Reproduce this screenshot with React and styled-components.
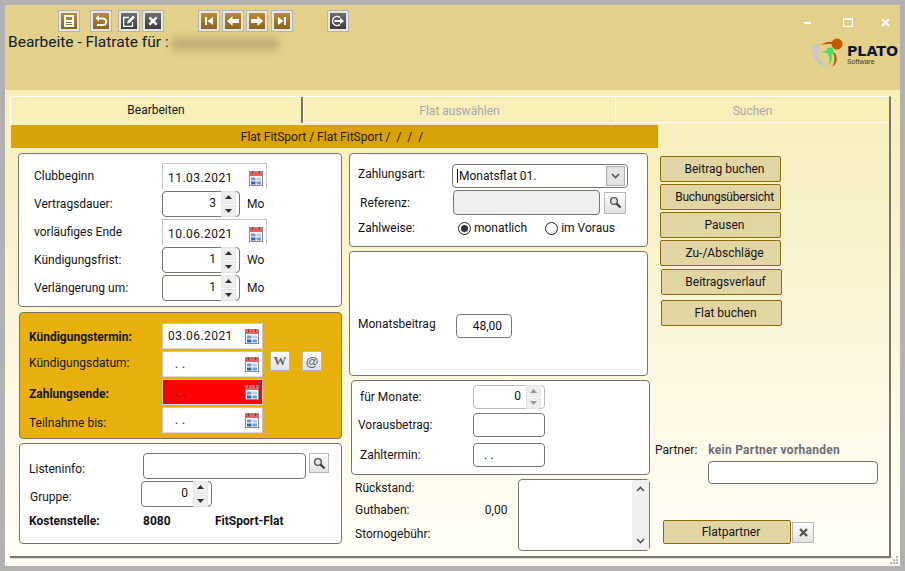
import React from "react";
import styled, { createGlobalStyle } from "styled-components";

const GlobalStyle = createGlobalStyle`
  html, body { margin: 0; padding: 0; }
  body { font-family: Roboto, "Noto Sans", "Liberation Sans", sans-serif; font-size: 12px; color: #141414; }
`;

const Window = styled.div`
  width: 905px;
  height: 571px;
  box-sizing: border-box;
  border: 5px solid #b1b1b1;
  display: flex;
  flex-direction: column;
  overflow: hidden;
`;

const Header = styled.div`
  height: 85px;
  flex: none;
  background: #e3d08a;
  display: flex;
  justify-content: space-between;
`;

const HeaderLeft = styled.div`
  padding: 5px 0 0 3px;
`;

const Toolbar = styled.div`
  display: flex;
`;

const ToolGroup = styled.div`
  display: flex;
  gap: 2px;
  margin-left: ${(p) => p.$ml}px;
`;

const ToolBtn = styled.div`
  width: 22px;
  height: 22px;
  box-sizing: border-box;
  border: 1px solid #b4b4b4;
  padding: 2px;
  margin-left: ${(p) => p.$ml || 0}px;
  background: #e6e6e0;
  & > div {
    width: 16px;
    height: 16px;
    display: flex;
    align-items: center;
    justify-content: center;
    background: ${(p) =>
      p.$dark
        ? "linear-gradient(#6e6e6e, #3c3c3c)"
        : "linear-gradient(#b98c34, #8a6420)"};
  }
`;

const Title = styled.div`
  font-size: 15.5px;
  line-height: 20px;
  color: #10202c;
  display: flex;
  align-items: center;
  gap: 3px;
`;

const BlurredName = styled.span`
  display: inline-block;
  width: 106px;
  height: 12px;
  margin-top: 4px;
  background: #bcaa74;
  filter: blur(4px);
`;

const HeaderRight = styled.div`
  display: flex;
  flex-direction: column;
  align-items: flex-end;
`;

const WinControls = styled.div`
  display: flex;
  align-items: center;
  height: 17px;
  margin-top: 9px;
  margin-right: 10px;
  gap: 28px;
  svg:first-child { margin-right: 3px; }
`;

const LogoBox = styled.div`
  display: flex;
  margin-top: 7px;
  margin-right: 2px;
`;

const LogoText = styled.div`
  padding-top: 7px;
  color: #10123e;
  b {
    display: block;
    font-family: "DejaVu Sans", sans-serif;
    font-size: 14.2px;
    line-height: 13px;
    font-weight: 700;
  }
  span {
    display: block;
    font-family: "Liberation Sans", sans-serif;
    font-size: 7px;
    line-height: 7px;
    color: #3d3a2a;
  }
`;

const Body = styled.div`
  flex: 1;
  position: relative;
  padding: 6px 9px 8px 5px;
  background: linear-gradient(#f7eeb8, #fffdf4 90%);
`;

const Grip = styled.svg`
  position: absolute;
  right: 1px;
  bottom: 1px;
`;

const TabPanel = styled.div`
  height: 462px;
  box-sizing: border-box;
  border-top: 1px solid #fff;
  border-right: 2px solid #77756c;
  border-bottom: 2px solid #77756c;
  box-shadow: 0 1px 0 #ddd;
  border-top-left-radius: 3px;
`;

const Tabs = styled.div`
  display: flex;
  height: 26px;
  border-bottom: 1px solid transparent;
`;

const Tab = styled.div`
  width: ${(p) => p.$w}px;
  box-sizing: border-box;
  display: flex;
  align-items: center;
  justify-content: center;
  padding-top: ${(p) => (p.$active ? 0 : 3)}px;
  background: #f7eeb8;
  color: ${(p) => (p.$active ? "#161616" : "#a9a8b0")};
  border-left: 1px solid #fff;
  border-bottom: ${(p) => (p.$active ? "0" : "1px solid #fff")};
  border-right: ${(p) => (p.$active ? "2px solid #77756c" : "0")};
`;

const TabBar = styled.div`
  width: 647px;
  height: 23px;
  margin: 1px 0 0 1px;
  padding-right: 5px;
  box-sizing: border-box;
  background: #d7a305;
  display: flex;
  align-items: center;
  justify-content: center;
  color: #261a00;
`;

const Columns = styled.div`
  display: flex;
  padding: 5px 0 0 8px;
`;

const LeftCol = styled.div`
  width: 324px;
  display: flex;
  flex-direction: column;
  align-items: flex-end;
`;

const MidCol = styled.div`
  width: 301px;
  margin-left: 7px;
  display: flex;
  flex-direction: column;
`;

const RightCol = styled.div`
  margin-left: 5px;
  width: 232px;
`;

const Card = styled.div`
  box-sizing: border-box;
  width: ${(p) => p.$w}px;
  height: ${(p) => p.$h}px;
  margin-top: ${(p) => p.$mt || 0}px;
  margin-left: ${(p) => p.$ml || 0}px;
  padding: ${(p) => p.$pad};
  background: ${(p) => p.$bg || "#fff"};
  border: 1px solid #77756c;
  border-radius: 4px;
  display: flex;
  flex-direction: column;
  justify-content: ${(p) => (p.$center ? "center" : "flex-start")};
  gap: ${(p) => p.$gap || 0}px;
  flex: none;
`;

const Row = styled.div`
  display: flex;
  align-items: center;
  height: ${(p) => p.$h || 26}px;
  margin-top: ${(p) => p.$mt || 0}px;
`;

const Label = styled.div`
  width: ${(p) => p.$w}px;
  margin-left: ${(p) => p.$ml || 0}px;
  flex: none;
  font-weight: ${(p) => (p.$bold ? 700 : 400)};
  position: relative;
  top: ${(p) => p.$up || 0}px;
`;

const Unit = styled.div`
  margin-left: 7px;
`;

const DateField = styled.div`
  box-sizing: border-box;
  width: ${(p) => p.$w}px;
  height: 26px;
  display: flex;
  align-items: center;
  justify-content: space-between;
  padding: ${(p) => (p.$open ? "3px" : "0")} 3px 0 5px;
  background: ${(p) => p.$bg || "#fff"};
  border: 1px solid #c4c4c4;
  border-bottom: ${(p) => (p.$open ? "0" : "1px solid #d8d8d8")};
  letter-spacing: 0.45px;
  span { margin-left: ${(p) => (p.$empty ? 7 : 0)}px; }
`;

const SpinBox = styled.div`
  box-sizing: border-box;
  width: ${(p) => p.$w}px;
  height: ${(p) => p.$h || 26}px;
  border: 1px solid ${(p) => (p.$light ? "#bdbdbd" : "#77756c")};
  border-radius: 4px;
  background: #fff;
  display: flex;
  align-items: center;
  justify-content: flex-end;
  padding-right: 3px;
  gap: 5px;
  span { margin-top: -3px; }
`;

const SpinBtns = styled.div`
  width: 15px;
  display: flex;
  flex-direction: column;
  gap: 1px;
  div {
    height: ${(p) => (p.$light ? 9.5 : 10.5)}px;
    background: #eeeeee;
    border: 1px solid #e4e4e4;
    display: flex;
    align-items: center;
    justify-content: center;
  }
`;

const Input = styled.div`
  box-sizing: border-box;
  width: ${(p) => p.$w}px;
  height: ${(p) => p.$h || 24}px;
  margin-left: ${(p) => p.$ml || 0}px;
  margin-top: ${(p) => p.$mt || 0}px;
  border: 1px solid #77756c;
  border-radius: 4px;
  background: ${(p) => p.$bg || "#fff"};
  display: flex;
  align-items: center;
  padding: 0 ${(p) => p.$pr || 0}px 0 ${(p) => p.$pl || 0}px;
  justify-content: ${(p) => (p.$right ? "flex-end" : "flex-start")};
`;

const SelectBox = styled(Input)`
  justify-content: space-between;
  padding: 0 2px 0 4px;
  span { border-left: 1px solid #111; padding-left: 1px; }
`;

const SelectArrow = styled.div`
  width: 17px;
  height: 18px;
  background: #e3e3e3;
  border: 1px solid #aaa;
  display: flex;
  align-items: center;
  justify-content: center;
`;

const IconBtn = styled.div`
  box-sizing: border-box;
  width: ${(p) => p.$w || 20}px;
  height: ${(p) => p.$h || 20}px;
  margin-left: ${(p) => p.$ml || 0}px;
  align-self: ${(p) => (p.$top ? "flex-start" : "center")};
  border: 1px solid #b7b7b7;
  background: linear-gradient(#fdfdfd, #e2e2e2);
  display: flex;
  align-items: center;
  justify-content: center;
  font-family: ${(p) => (p.$sans ? '"Liberation Sans"' : '"Liberation Serif"')}, serif;
  font-weight: 700;
  font-size: 13px;
  color: #666;
`;

const Radio = styled.div`
  box-sizing: border-box;
  width: 13px;
  height: 13px;
  border-radius: 50%;
  border: 1px solid #222;
  margin-left: ${(p) => p.$ml}px;
  margin-right: 3px;
  background: #fff;
  display: flex;
  align-items: center;
  justify-content: center;
  &::after {
    content: "";
    width: 7px;
    height: 7px;
    border-radius: 50%;
    background: ${(p) => (p.$on ? "#333" : "transparent")};
  }
`;

const BottomRow = styled.div`
  display: flex;
  margin-top: 4px;
  height: 72px;
`;

const Stats = styled.div`
  width: 153px;
  margin-left: 6px;
  display: flex;
  flex-direction: column;
`;

const StatRow = styled.div`
  display: flex;
  justify-content: space-between;
  height: ${(p) => p.$h}px;
  align-items: center;
`;

const Memo = styled.div`
  box-sizing: border-box;
  width: 132px;
  margin-left: 11px;
  border: 1px solid #77756c;
  border-radius: 4px;
  background: #fff;
  display: flex;
  justify-content: flex-end;
`;

const MemoScroll = styled.div`
  width: 17px;
  background: #f0f0f0;
  display: flex;
  flex-direction: column;
  justify-content: space-between;
  align-items: center;
  padding: 6px 0;
`;

const ActionBtn = styled.div`
  box-sizing: border-box;
  width: ${(p) => p.$w || 121}px;
  height: ${(p) => p.$h || 26}px;
  margin-left: ${(p) => p.$ml || 5}px;
  margin-top: ${(p) => p.$mt ?? 2}px;
  background: #e1d5a4;
  border: 1px solid #8c6c06;
  border-radius: 2px;
  display: flex;
  align-items: center;
  justify-content: center;
  padding-left: 8px;
  letter-spacing: ${(p) => p.$tight ? "-0.25px" : "0"};
  flex: none;
`;

const PartnerHead = styled.div`
  display: flex;
  margin-top: 117px;
  align-items: center;
  height: 14px;
`;

const PartnerName = styled.div`
  margin-left: 11px;
  font-weight: 700;
  letter-spacing: 0.25px;
  color: #6d6d78;
`;

const PartnerRow = styled.div`
  display: flex;
  align-items: center;
  margin-top: 36px;
`;

const Cal = () => (
  <svg width="14" height="15" viewBox="0 0 14 15">
    <rect x="0.5" y="0.5" width="13" height="14" fill="#fff" stroke="#8a8a8a" />
    <rect x="1" y="1" width="12" height="4" fill="#e8605c" />
    <rect x="3" y="0" width="1" height="3" fill="#8c3a38" />
    <rect x="10" y="0" width="1" height="3" fill="#8c3a38" />
    <rect x="2" y="6.5" width="4.5" height="3" fill="#6f9bd8" />
    <rect x="7.5" y="6.5" width="4.5" height="3" fill="#b9cbe8" />
    <rect x="2" y="10.5" width="4.5" height="3" fill="#2f62c0" />
    <rect x="7.5" y="10.5" width="4.5" height="3" fill="#6f9bd8" />
  </svg>
);

const Search = () => (
  <svg width="13" height="13" viewBox="0 0 13 13">
    <circle cx="5" cy="5" r="3.4" fill="#dfe6ea" stroke="#555" strokeWidth="1.4" />
    <path d="M7.6 7.6 L11.5 11.5" stroke="#444" strokeWidth="2.2" />
  </svg>
);

const Tri = ({ up, color = "#333" }) => (
  <svg width="7" height="4" viewBox="0 0 7 4">
    <path d={up ? "M3.5 0 L7 4 H0 Z" : "M0 0 H7 L3.5 4 Z"} fill={color} />
  </svg>
);

const Chevron = ({ up }) => (
  <svg width="9" height="6" viewBox="0 0 9 6">
    <path d={up ? "M1 5 L4.5 1.5 L8 5" : "M1 1 L4.5 4.5 L8 1"} fill="none" stroke="#555" strokeWidth="1.6" />
  </svg>
);

const Glyph = ({ children }) => (
  <svg width="14" height="14" viewBox="0 0 14 14" fill="#fff">
    {children}
  </svg>
);

const Spin = ({ w, h, value, light }) => (
  <SpinBox $w={w} $h={h} $light={light}>
    <span>{value}</span>
    <SpinBtns $light={light}>
      <div><Tri up color={light ? "#999" : "#333"} /></div>
      <div><Tri color={light ? "#999" : "#333"} /></div>
    </SpinBtns>
  </SpinBox>
);

const DateBox = ({ w, value, open, bg }) => (
  <DateField $w={w} $open={open} $bg={bg} $empty={value === ". ."}>
    <span>{value}</span>
    <Cal />
  </DateField>
);

export default function App() {
  return (
    <>
      <GlobalStyle />
      <Window>
        <Header>
          <HeaderLeft>
            <Toolbar>
              <ToolGroup $ml={50}>
                <ToolBtn><div><Glyph><path fillRule="evenodd" d="M2 1H12V13H2ZM4 3V6H10V3ZM4 8V9H10V8ZM4 10V11H10V10Z" /></Glyph></div></ToolBtn>
              </ToolGroup>
              <ToolGroup $ml={10}>
                <ToolBtn><div><Glyph><path d="M5 1 L1.5 4.2 L5 7.4 V5.4 H9 A2.3 2.3 0 0 1 9 10 H3 V12 H9 A4.3 4.3 0 0 0 9 3.4 H5 Z" /></Glyph></div></ToolBtn>
              </ToolGroup>
              <ToolGroup $ml={6}>
                <ToolBtn $dark><div><Glyph><path fill="none" stroke="#fff" strokeWidth="1.3" d="M10.5 8V12.3H1.7V3.5H7" /><path d="M5 9.5 L5.6 7 L11 1.6 L12.9 3.5 L7.5 8.9 Z" /></Glyph></div></ToolBtn>
                <ToolBtn $dark><div><Glyph><path d="M2.5 4.3 L4.3 2.5 L7 5.2 L9.7 2.5 L11.5 4.3 L8.8 7 L11.5 9.7 L9.7 11.5 L7 8.8 L4.3 11.5 L2.5 9.7 L5.2 7 Z" /></Glyph></div></ToolBtn>
              </ToolGroup>
              <ToolGroup $ml={34}>
                <ToolBtn><div><Glyph><path d="M3 3H5V11H3ZM11 3V11L5.5 7Z" /></Glyph></div></ToolBtn>
                <ToolBtn><div><Glyph><path d="M1 7 L6.5 2 V5 H13 V9 H6.5 V12 Z" /></Glyph></div></ToolBtn>
                <ToolBtn><div><Glyph><path d="M13 7 L7.5 2 V5 H1 V9 H7.5 V12 Z" /></Glyph></div></ToolBtn>
                <ToolBtn $ml={1}><div><Glyph><path d="M11 3H9V11H11ZM3 3V11L8.5 7Z" /></Glyph></div></ToolBtn>
              </ToolGroup>
              <ToolGroup $ml={34}>
                <ToolBtn $dark><div><Glyph><path fill="none" stroke="#fff" strokeWidth="1.4" d="M9 3.4 A4.6 4.6 0 1 0 9 10.6" /><path d="M3.5 6 H9 V3.8 L13 7 L9 10.2 V8 H3.5 Z" /></Glyph></div></ToolBtn>
              </ToolGroup>
            </Toolbar>
            <Title>
              Bearbeite - Flatrate für :
              <BlurredName />
            </Title>
          </HeaderLeft>
          <HeaderRight>
            <WinControls>
              <svg width="8" height="3"><rect width="7" height="2" y="1" fill="#fff" /></svg>
              <svg width="10" height="9"><rect x="0.5" y="0.5" width="9" height="8" fill="none" stroke="#fff" /><rect width="10" height="2" fill="#fff" /></svg>
              <svg width="9" height="9" viewBox="0 0 9 9"><path d="M1 1 L8 8 M8 1 L1 8" stroke="#fff" strokeWidth="2" /></svg>
            </WinControls>
            <LogoBox>
              <svg width="36" height="32" viewBox="0 0 36 32">
                <circle cx="5" cy="11" r="4.5" fill="#c8c8c8" />
                <circle cx="26" cy="6" r="5.5" fill="#c25c00" />
                <circle cx="19" cy="13" r="3.5" fill="#4cd964" />
                <path d="M2 16 C3 25 12 30 20 29 C13 27 8 22 7 15 Z" fill="#c8c8c8" />
                <path d="M10 7 C14 4 18 3 21 4 L21 6 C17 6 13 6 10 7 Z" fill="#c25c00" />
                <path d="M21 29 C24 24 24 19 22 15 L24 15 C27 20 26 26 21 29 Z" fill="#c25c00" />
                <path d="M10 15 C14 12 17 12 19 14 C22 18 21 24 18 27 C19 22 19 18 16 15 C14 14 12 14 10 15 Z" fill="#4cd964" />
              </svg>
              <LogoText>
                <b>PLATO</b>
                <span>Software</span>
              </LogoText>
            </LogoBox>
          </HeaderRight>
        </Header>
        <Body>
          <TabPanel>
            <Tabs>
              <Tab $w={293} $active>Bearbeiten</Tab>
              <Tab $w={312}>Flat auswählen</Tab>
              <Tab $w={274}>Suchen</Tab>
            </Tabs>
            <TabBar>Flat FitSport / Flat FitSport /&nbsp; / &nbsp;/ &nbsp;/</TabBar>
            <Columns>
              <LeftCol>
                <Card $w={324} $h={154} $pad="9px 0 0 15px" $gap={2}>
                  <Row><Label $w={128}>Clubbeginn</Label><DateBox w={105} value="11.03.2021" open /></Row>
                  <Row><Label $w={128}>Vertragsdauer:</Label><Spin w={78} value="3" /><Unit>Mo</Unit></Row>
                  <Row><Label $w={128}>vorläufiges Ende</Label><DateBox w={105} value="10.06.2021" open /></Row>
                  <Row><Label $w={128}>Kündigungsfrist:</Label><Spin w={78} value="1" /><Unit>Wo</Unit></Row>
                  <Row><Label $w={128}>Verlängerung um:</Label><Spin w={78} value="1" /><Unit>Mo</Unit></Row>
                </Card>
                <Card $w={323} $h={127} $mt={5} $bg="#e8b00a" $pad="10px 0 0 9px" $gap={2}>
                  <Row><Label $w={133} $bold $up={1}>Kündigungstermin:</Label><DateBox w={101} value="03.06.2021" /></Row>
                  <Row>
                    <Label $w={133} $up={-1}>Kündigungsdatum:</Label>
                    <DateBox w={101} value=". ." />
                    <IconBtn $ml={7} $top>W</IconBtn>
                    <IconBtn $ml={12} $sans $top>@</IconBtn>
                  </Row>
                  <Row><Label $w={133} $bold $up={2}>Zahlungsende:</Label><DateBox w={101} value=". ." bg="#ff0000" /></Row>
                  <Row><Label $w={133} $up={3}>Teilnahme bis:</Label><DateBox w={101} value=". ." /></Row>
                </Card>
                <Card $w={323} $h={101} $mt={4} $pad="9px 0 0 9px" $gap={2}>
                  <Row>
                    <Label $w={114} $up={3}>Listeninfo:</Label>
                    <Input $w={163} $h={26} />
                    <IconBtn $ml={3} $top><Search /></IconBtn>
                  </Row>
                  <Row>
                    <Label $w={111} $ml={1} $up={3}>Gruppe:</Label>
                    <Spin w={71} value="0" />
                  </Row>
                  <Row $h={20} $mt={2}>
                    <Label $w={114} $bold>Kostenstelle:</Label>
                    <Label $w={72} $bold>8080</Label>
                    <Label $w={100} $bold>FitSport-Flat</Label>
                  </Row>
                </Card>
              </LeftCol>
              <MidCol>
                <Card $w={299} $h={94} $pad="10px 0 0 8px" $gap={2}>
                  <Row $h={24}>
                    <Label $w={94} $up={-2}>Zahlungsart:</Label>
                    <SelectBox $w={176}><span>Monatsflat 01.</span><SelectArrow><Chevron /></SelectArrow></SelectBox>
                  </Row>
                  <Row $h={25}>
                    <Label $w={93} $ml={2}>Referenz:</Label>
                    <Input $w={147} $h={25} $bg="#efefef" />
                    <IconBtn $ml={4} $w={22} $h={22}><Search /></IconBtn>
                  </Row>
                  <Row $h={20} $mt={1}>
                    <Label $w={95}>Zahlweise:</Label>
                    <Radio $on $ml={5} />monatlich
                    <Radio $ml={18} />im Voraus
                  </Row>
                </Card>
                <Card $w={299} $h={125} $mt={4} $pad="0 0 0 8px" $center>
                  <Row $mt={25}>
                    <Label $w={98} $up={-2}>Monatsbeitrag</Label>
                    <Input $w={56} $right $pr={9}>48,00</Input>
                  </Row>
                </Card>
                <Card $w={299} $h={95} $mt={4} $ml={2} $pad="4px 0 0 6px" $gap={4}>
                  <Row $h={24}>
                    <Label $w={113} $ml={2}>für Monate:</Label>
                    <Spin w={72} h={24} value="0" light />
                  </Row>
                  <Row $h={24}>
                    <Label $w={115}>Vorausbetrag:</Label>
                    <Input $w={72} />
                  </Row>
                  <Row $h={24} $mt={2}>
                    <Label $w={113} $ml={2}>Zahltermin:</Label>
                    <Input $w={72} $pl={10}>. .</Input>
                  </Row>
                </Card>
                <BottomRow>
                  <Stats>
                    <StatRow $h={18}>Rückstand:</StatRow>
                    <StatRow $h={26}>
                      Guthaben:
                      <span>0,00</span>
                    </StatRow>
                    <StatRow $h={22}>Stornogebühr:</StatRow>
                  </Stats>
                  <Memo>
                    <MemoScroll><Chevron up /><Chevron /></MemoScroll>
                  </Memo>
                </BottomRow>
              </MidCol>
              <RightCol>
                <ActionBtn $mt={3}>Beitrag buchen</ActionBtn>
                <ActionBtn $tight>Buchungsübersicht</ActionBtn>
                <ActionBtn>Pausen</ActionBtn>
                <ActionBtn>Zu-/Abschläge</ActionBtn>
                <ActionBtn $ml={6} $mt={3}>Beitragsverlauf</ActionBtn>
                <ActionBtn $ml={6} $mt={5}>Flat buchen</ActionBtn>
                <PartnerHead>
                  Partner:
                  <PartnerName>kein Partner vorhanden</PartnerName>
                </PartnerHead>
                <Input $w={170} $h={23} $ml={53} $mt={4} />
                <PartnerRow>
                  <ActionBtn $w={128} $h={24} $ml={8} $mt={0}>Flatpartner</ActionBtn>
                  <IconBtn $w={22} $h={21} $ml={1}>
                    <svg width="11" height="11" viewBox="0 0 11 11"><path d="M2 2 L9 9 M9 2 L2 9" stroke="#555" strokeWidth="2.4" /></svg>
                  </IconBtn>
                </PartnerRow>
              </RightCol>
            </Columns>
          </TabPanel>
          <Grip width="10" height="10" viewBox="0 0 10 10" fill="#b5b5b5">
            <rect x="7" y="1" width="2" height="2" />
            <rect x="4" y="4" width="2" height="2" />
            <rect x="7" y="4" width="2" height="2" />
            <rect x="1" y="7" width="2" height="2" />
            <rect x="4" y="7" width="2" height="2" />
            <rect x="7" y="7" width="2" height="2" />
          </Grip>
        </Body>
      </Window>
    </>
  );
}
